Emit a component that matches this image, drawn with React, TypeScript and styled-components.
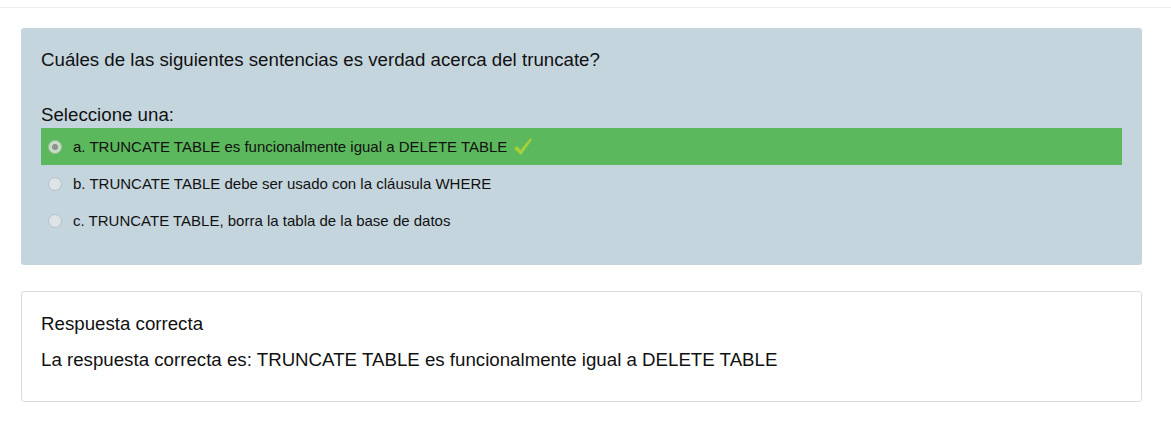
import React from 'react'
import styled, { createGlobalStyle } from 'styled-components'

const GlobalStyle = createGlobalStyle`
    body {
        margin: 0;
        background: #ffffff;
        font-family: "Liberation Sans", Arial, sans-serif;
        color: #111;
    }
`

const TopBar = styled.div`
    height: 7px;
    border-bottom: 1px solid #ececec;
`

const Page = styled.div`
    padding: 20px 29px 0 21px;
    display: flex;
    flex-direction: column;
    gap: 26px;
`

const QuestionCard = styled.div`
    background: #c5d5de;
    border-radius: 3px;
    padding: 21px 20px 26px 20px;
`

const QuestionText = styled.div`
    font-size: 18.7px;
    line-height: 22px;
    margin-bottom: 33px;
`

const Prompt = styled.div`
    font-size: 18.7px;
    line-height: 22px;
    margin-bottom: 2px;
`

const Options = styled.div`
    display: flex;
    flex-direction: column;
`

const Option = styled.label<{ $correct?: boolean }>`
    display: flex;
    align-items: center;
    height: 37px;
    padding-left: 7px;
    background: ${p => (p.$correct ? '#5cb85c' : 'transparent')};
    font-size: 15px;
    color: #111;
`

const Radio = styled.span<{ $checked?: boolean }>`
    width: 14px;
    height: 14px;
    box-sizing: border-box;
    border-radius: 50%;
    border: 1px solid ${p => (p.$checked ? '#9cbf9c' : '#b5c2c9')};
    background: ${p => (p.$checked ? '#c9dcc9' : '#dde3e7')};
    margin-right: 11px;
    display: flex;
    align-items: center;
    justify-content: center;
    flex-shrink: 0;
    &:after {
        content: "";
        display: ${p => (p.$checked ? 'block' : 'none')};
        width: 6px;
        height: 6px;
        border-radius: 50%;
        background: #8a948a;
    }
`

const Check = styled.svg`
    margin-left: 6px;
    width: 20px;
    height: 19px;
`

const FeedbackCard = styled.div`
    border: 1px solid #dcdcdc;
    border-radius: 3px;
    padding: 21px 19px 30px 19px;
`

const FeedbackTitle = styled.div`
    font-size: 18.7px;
    line-height: 22px;
    margin-bottom: 14px;
`

const FeedbackAnswer = styled.div`
    font-size: 18.7px;
    line-height: 22px;
`

const options = [
    { key: 'a', text: 'TRUNCATE TABLE es funcionalmente igual a DELETE TABLE', correct: true },
    { key: 'b', text: 'TRUNCATE TABLE debe ser usado con la cláusula WHERE', correct: false },
    { key: 'c', text: 'TRUNCATE TABLE, borra la tabla de la base de datos', correct: false },
]

const App = () => {
    return (
        <>
            <GlobalStyle />
            <TopBar />
            <Page>
                <QuestionCard>
                    <QuestionText>Cuáles de las siguientes sentencias es verdad acerca del truncate?</QuestionText>
                    <Prompt>Seleccione una:</Prompt>
                    <Options>
                        {options.map(o => (
                            <Option key={o.key} $correct={o.correct}>
                                <Radio $checked={o.correct} />
                                {o.key}. {o.text}
                                {o.correct && (
                                    <Check viewBox="0 0 20 19">
                                        <path d="M1 11.5 L4 9 L7.5 13 L17.5 1 L19 2.5 L8 18 Z" fill="#a6d03a" />
                                    </Check>
                                )}
                            </Option>
                        ))}
                    </Options>
                </QuestionCard>
                <FeedbackCard>
                    <FeedbackTitle>Respuesta correcta</FeedbackTitle>
                    <FeedbackAnswer>La respuesta correcta es: TRUNCATE TABLE es funcionalmente igual a DELETE TABLE</FeedbackAnswer>
                </FeedbackCard>
            </Page>
        </>
    )
}

export default App
